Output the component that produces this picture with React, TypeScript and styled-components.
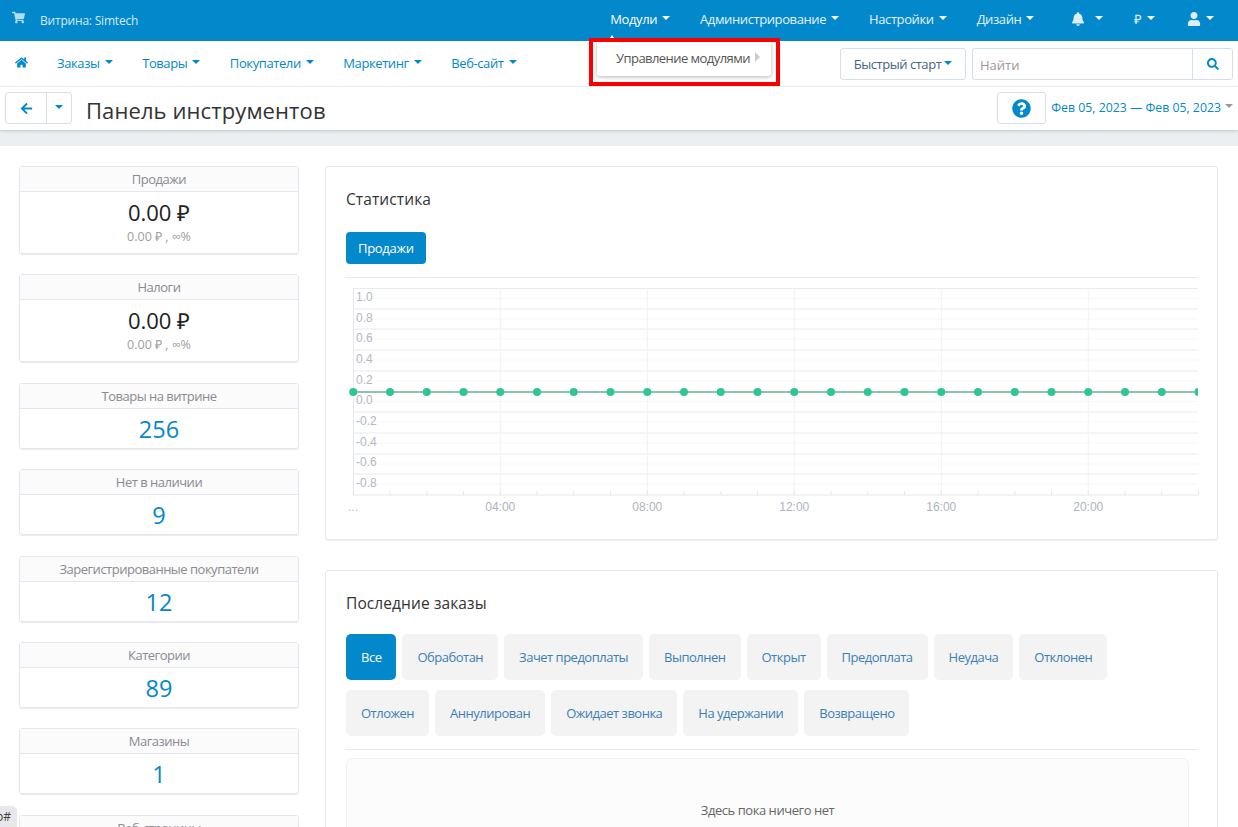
import React from "react";
import styled, { createGlobalStyle } from "styled-components";
import { FaShoppingCart, FaHome, FaArrowLeft, FaBell, FaUser, FaSearch, FaQuestionCircle } from "react-icons/fa";

const Global = createGlobalStyle`
  html, body { margin: 0; padding: 0; height: 827px; overflow: hidden; background: #fff; }
  body { font-family: "Open Sans", "Liberation Sans", sans-serif; font-size: 13px; color: #333; }
  * { box-sizing: border-box; }
`;

const BLUE = "#0388cc";

const Page = styled.div`
  position: relative;
  width: 1238px;
  height: 827px;
  overflow: hidden;
`;

const TopBar = styled.header`
  height: 41px;
  background: ${BLUE};
  display: flex;
  align-items: flex-start;
  padding: 0 24px 0 12px;
  color: #fff;
`;
const StoreLink = styled.div`
  display: flex;
  align-items: center;
  height: 41px;
  font-size: 12px;
  letter-spacing: -0.2px;
  font-weight: 400;
  color: #d4ebf7;
  svg { margin: -7px 15px 0 0; width: 13px; height: 13px; color: #b6dcf0; }
`;
const TopMenu = styled.nav`
  margin-left: auto;
  display: flex;
  align-items: center;
  height: 38px;
`;
const TopItem = styled.span<{ $gap?: number; $active?: boolean }>`
  display: flex;
  align-items: center;
  margin-left: ${(p) => p.$gap ?? 0}px;
  font-size: 13px;
  letter-spacing: -0.4px;
  font-weight: 400;
  color: ${(p) => (p.$active ? "#fff" : "#e4f2fa")};
  svg { width: 14px; height: 14px; color: #dceef8; }
`;
const Caret = styled.i<{ $color?: string; $left?: number }>`
  display: inline-block;
  width: 0;
  height: 0;
  margin-left: ${(p) => p.$left ?? 5}px;
  border-left: 4.5px solid transparent;
  border-right: 4.5px solid transparent;
  border-top: 4.5px solid ${(p) => p.$color ?? "#fff"};
  position: relative;
  top: -1px;
`;

const SecondBar = styled.nav`
  height: 46px;
  display: flex;
  align-items: center;
  padding: 0 5px 0 15px;
  border-bottom: 1px solid #f1f2f4;
`;
const HomeLink = styled.span`
  display: flex;
  margin: -2px 29px 0 0;
  color: ${BLUE};
  svg { width: 13px; height: 13px; }
`;
const SecondItem = styled.span`
  display: flex;
  align-items: center;
  margin-right: 29.5px;
  color: ${BLUE};
  font-size: 13px;
  letter-spacing: -0.4px;
  margin-top: -2px;
`;
const SecondRight = styled.div`
  margin-left: auto;
  display: flex;
  gap: 6px;
`;
const QuickStart = styled.button`
  width: 126px;
  height: 32px;
  border: 1px solid #d6dfe6;
  border-radius: 3px;
  background: #fff;
  font: 13px "Open Sans", sans-serif;
  letter-spacing: -0.45px;
  color: #43667f;
  display: flex;
  align-items: center;
  justify-content: center;
  padding: 0;
`;
const SearchBox = styled.div`
  width: 261px;
  height: 32px;
  border: 1px solid #d6dfe6;
  border-radius: 3px;
  display: flex;
`;
const SearchField = styled.span`
  flex: 1;
  padding: 0 7px;
  line-height: 32px;
  font-size: 13px;
  color: #999;
`;
const SearchBtn = styled.span`
  width: 40px;
  border-left: 1px solid #d6dfe6;
  display: flex;
  align-items: center;
  justify-content: center;
  color: ${BLUE};
  svg { width: 12px; height: 12px; }
`;

const Toolbar = styled.div`
  height: 43px;
  display: flex;
  align-items: flex-start;
  padding: 5px 5px 0 5px;
  background: #fff;
  box-shadow: 0 1px 3px rgba(0, 0, 0, 0.18);
  position: relative;
`;
const BackGroup = styled.div`
  width: 67px;
  height: 32px;
  display: flex;
  border: 1px solid #d6dfe6;
  border-radius: 3px;
`;
const BackBtn = styled.span`
  width: 41px;
  border-right: 1px solid #d6dfe6;
  display: flex;
  align-items: center;
  justify-content: center;
  color: ${BLUE};
  svg { width: 13px; height: 13px; }
`;
const BackCaret = styled.span`
  flex: 1;
  display: flex;
  align-items: center;
  justify-content: center;
  i { margin: 0; }
`;
const PageTitle = styled.h1`
  margin: 0 0 0 14px;
  font-size: 22px;
  line-height: 36px;
  font-weight: 400;
  color: #333;
  letter-spacing: 0.1px;
`;
const ToolbarRight = styled.div`
  margin-left: auto;
  display: flex;
  align-items: center;
  height: 32px;
`;
const HelpBtn = styled.span`
  width: 49px;
  height: 32px;
  border: 1px solid #d6dfe6;
  border-radius: 3px;
  display: flex;
  align-items: center;
  justify-content: center;
  color: ${BLUE};
  svg { width: 19px; height: 19px; }
`;
const DateRange = styled.span`
  display: flex;
  align-items: center;
  margin-left: 5px;
  margin-top: -2px;
  font-size: 12.3px;
  color: ${BLUE};
`;

const Strip = styled.div`
  height: 16px;
  background: #eceff2;
`;

const Content = styled.main`
  display: grid;
  grid-template-columns: 280px 893px;
  column-gap: 26px;
  padding: 20px 0 0 19px;
`;
const StatColumn = styled.aside`
  display: flex;
  flex-direction: column;
  gap: 20.4px;
`;
const StatCard = styled.section`
  border: 1px solid #e3e7f0;
  border-radius: 3px;
  box-shadow: 0 1px 1px rgba(0, 0, 0, 0.08);
  text-align: center;
`;
const StatHead = styled.div`
  height: 25px;
  line-height: 25px;
  background: #fbfbfc;
  border-bottom: 1px solid #e3e7f0;
  font-size: 13px;
  letter-spacing: -0.5px;
  color: #8a8a92;
`;
const StatBody = styled.div<{ $top: number; $bottom: number }>`
  padding: ${(p) => p.$top}px 0 ${(p) => p.$bottom}px;
`;
const Amount = styled.div`
  font-size: 22px;
  line-height: 31px;
  color: #222;
`;
const SubAmount = styled.div`
  font-size: 12.5px;
  line-height: 18px;
  color: #a0a0a0;
`;
const BigNumber = styled.div`
  font-size: 23.5px;
  line-height: 27px;
  color: ${BLUE};
`;

const Panels = styled.div`
  display: flex;
  flex-direction: column;
  gap: 30px;
`;
const Panel = styled.section`
  border: 1px solid #e3e7f0;
  border-radius: 3px;
  box-shadow: 0 1px 1px rgba(0, 0, 0, 0.06);
  padding: 20px 20px 21px;
`;
const PanelTitle = styled.h2<{ $after: number }>`
  margin: 0 0 ${(p) => p.$after}px;
  font-size: 15.5px;
  letter-spacing: 0.1px;
  line-height: 25px;
  font-weight: 500;
  color: #333;
`;
const PrimaryTab = styled.span`
  display: inline-block;
  height: 32px;
  line-height: 32px;
  padding: 0 12px;
  border-radius: 4px;
  background: ${BLUE};
  color: #fff;
  font-size: 13px;
  letter-spacing: -0.3px;
  font-weight: 400;
`;
const Rule = styled.hr<{ $top: number; $bottom: number }>`
  border: 0;
  border-top: 1px solid #e8e8ea;
  margin: ${(p) => p.$top}px 0 ${(p) => p.$bottom}px;
`;
const ChartSvg = styled.svg`
  display: block;
  font-family: "Liberation Sans", Arial, sans-serif;
  font-size: 12px;
`;
const TabRow = styled.div`
  display: flex;
  flex-wrap: wrap;
  gap: 10px 6px;
  width: 843px;
`;
const FilterTab = styled.span<{ $on?: boolean }>`
  height: 46px;
  line-height: 46px;
  padding: 0 15px;
  border-radius: 5px;
  font-size: 13px;
  letter-spacing: -0.5px;
  background: ${(p) => (p.$on ? BLUE : "#f3f3f4")};
  color: ${(p) => (p.$on ? "#fff" : "#3c7fb5")};
`;
const EmptyBox = styled.div`
  width: 843px;
  height: 120px;
  border: 1px solid #f1f1f3;
  border-radius: 6px;
  background: #fcfcfc;
  text-align: center;
  padding-top: 41px;
  line-height: 20px;
  font-size: 13px;
  letter-spacing: -0.45px;
  color: #666;
`;

const Dropdown = styled.div`
  position: absolute;
  left: 597px;
  top: 41px;
  width: 174px;
  height: 35px;
  background: #fff;
  border-radius: 3px;
  box-shadow: 0 1px 4px rgba(0, 0, 0, 0.3);
  padding: 8px 0 0 19px;
  font-size: 13px;
  letter-spacing: -0.55px;
  line-height: 18px;
  color: #555;
  display: flex;
`;
const SubArrow = styled.i`
  width: 0;
  height: 0;
  margin: 3px 0 0 5px;
  border-top: 5px solid transparent;
  border-bottom: 5px solid transparent;
  border-left: 5px solid #ccc;
`;
const MenuNotch = styled.i`
  position: absolute;
  left: 608px;
  top: 35px;
  width: 0;
  height: 0;
  border-left: 4px solid transparent;
  border-right: 4px solid transparent;
  border-bottom: 6px solid #fff;
`;
const Highlight = styled.div`
  position: absolute;
  left: 589px;
  top: 38px;
  width: 191px;
  height: 48px;
  border: 4px solid #fa0000;
`;
const DebugTab = styled.div`
  position: absolute;
  left: -8px;
  top: 806px;
  width: 25px;
  height: 24px;
  background: #e8e8ea;
  border-radius: 0 5px 0 0;
  font-size: 12px;
  line-height: 22px;
  text-align: right;
  padding-right: 6px;
  color: #444;
`;

const hours = Array.from({ length: 24 }, (_, i) => 353.25 + i * 36.75);
const major = [288.5, 309, 329, 350, 371, 391.5, 412, 433, 454, 474];
const yLabels: [string, number][] = [
  ["1.0", 297], ["0.8", 318], ["0.6", 338], ["0.4", 359], ["0.2", 380],
  ["0.0", 400], ["-0.2", 421], ["-0.4", 442], ["-0.6", 462], ["-0.8", 483],
];
const xLabels: [string, number][] = [["04:00", 500.25], ["08:00", 647.25], ["12:00", 794.25], ["16:00", 941.25], ["20:00", 1088.25]];

function Chart() {
  return (
    <ChartSvg width={853} height={240} viewBox="346 278 853 240">
      <defs>
        <clipPath id="plot"><rect x="340" y="280" width="858" height="220" /></clipPath>
      </defs>
      {major.map((y) => (
        <React.Fragment key={y}>
          <line x1="353" x2="1198" y1={y} y2={y} stroke="#e9eaee" />
          <line x1="353" x2="1198" y1={y + 10} y2={y + 10} stroke="#f7f7f9" />
        </React.Fragment>
      ))}
      <line x1="353" x2="1198" y1="495" y2="495" stroke="#e6e7ea" />
      <line x1="353.5" x2="353.5" y1="288" y2="495" stroke="#e6e7ea" />
      {xLabels.map(([, x]) => (
        <line key={x} x1={x} x2={x} y1="288" y2="495" stroke="#f0f1f4" />
      ))}
      {hours.map((x) => (
        <line key={x} x1={x} x2={x} y1="491" y2="495" stroke="#e6e7ea" />
      ))}
      {yLabels.map(([t, y]) => (
        <text key={t} x="356" y={y + 4} fill="#b2b8c4">{t}</text>
      ))}
      {xLabels.map(([t, x]) => (
        <text key={t} x={x} y="511" fill="#adb3bf" textAnchor="middle">{t}</text>
      ))}
      <text x="348" y="511" fill="#b2c4d8">...</text>
      <g clipPath="url(#plot)">
        <line x1="353" x2="1198" y1="392" y2="392" stroke="#8cc5a9" strokeWidth="2" />
        {hours.map((x) => (
          <circle key={x} cx={x} cy="392" r="4" fill="#30c595" />
        ))}
      </g>
    </ChartSvg>
  );
}

const money = [{ title: "Продажи" }, { title: "Налоги" }];
const counts: [string, string][] = [
  ["Товары на витрине", "256"],
  ["Нет в наличии", "9"],
  ["Зарегистрированные покупатели", "12"],
  ["Категории", "89"],
  ["Магазины", "1"],
  ["Веб-страницы", "14"],
];
const tabs = ["Обработан", "Зачет предоплаты", "Выполнен", "Открыт", "Предоплата", "Неудача", "Отклонен", "Отложен", "Аннулирован", "Ожидает звонка", "На удержании", "Возвращено"];

export default function App() {
  return (
    <Page>
      <Global />
      <TopBar>
        <StoreLink><FaShoppingCart />Витрина: Simtech</StoreLink>
        <TopMenu>
          <TopItem $active>Модули<Caret /></TopItem>
          <TopItem $gap={30}>Администрирование<Caret /></TopItem>
          <TopItem $gap={30}>Настройки<Caret /></TopItem>
          <TopItem $gap={30}>Дизайн<Caret /></TopItem>
          <TopItem $gap={37}><FaBell /><Caret $left={10} /></TopItem>
          <TopItem $gap={31}>₽<Caret /></TopItem>
          <TopItem $gap={32}><FaUser /><Caret /></TopItem>
        </TopMenu>
      </TopBar>
      <SecondBar>
        <HomeLink><FaHome /></HomeLink>
        {["Заказы", "Товары", "Покупатели", "Маркетинг", "Веб-сайт"].map((t) => (
          <SecondItem key={t}>{t}<Caret $color={BLUE} /></SecondItem>
        ))}
        <SecondRight>
          <QuickStart>Быстрый старт<Caret $color={BLUE} $left={3} /></QuickStart>
          <SearchBox>
            <SearchField>Найти</SearchField>
            <SearchBtn><FaSearch /></SearchBtn>
          </SearchBox>
        </SecondRight>
      </SecondBar>
      <Toolbar>
        <BackGroup>
          <BackBtn><FaArrowLeft /></BackBtn>
          <BackCaret><Caret $color={BLUE} /></BackCaret>
        </BackGroup>
        <PageTitle>Панель инструментов</PageTitle>
        <ToolbarRight>
          <HelpBtn><FaQuestionCircle /></HelpBtn>
          <DateRange>Фев 05, 2023 — Фев 05, 2023<Caret $color="#999" $left={4} /></DateRange>
        </ToolbarRight>
      </Toolbar>
      <Strip />
      <Content>
        <StatColumn>
          {money.map((m) => (
            <StatCard key={m.title}>
              <StatHead>{m.title}</StatHead>
              <StatBody $top={5} $bottom={7}>
                <Amount>0.00 ₽</Amount>
                <SubAmount>0.00 ₽ , ∞%</SubAmount>
              </StatBody>
            </StatCard>
          ))}
          {counts.map(([t, n]) => (
            <StatCard key={t}>
              <StatHead>{t}</StatHead>
              <StatBody $top={7} $bottom={5}><BigNumber>{n}</BigNumber></StatBody>
            </StatCard>
          ))}
        </StatColumn>
        <Panels>
          <Panel>
            <PanelTitle $after={20}>Статистика</PanelTitle>
            <PrimaryTab>Продажи</PrimaryTab>
            <Rule $top={13} $bottom={0} />
            <Chart />
          </Panel>
          <Panel>
            <PanelTitle $after={18}>Последние заказы</PanelTitle>
            <TabRow>
              <FilterTab $on>Все</FilterTab>
              {tabs.map((t) => <FilterTab key={t}>{t}</FilterTab>)}
            </TabRow>
            <Rule $top={13} $bottom={8} />
            <EmptyBox>Здесь пока ничего нет</EmptyBox>
          </Panel>
        </Panels>
      </Content>
      <MenuNotch />
      <Dropdown>Управление модулями<SubArrow /></Dropdown>
      <Highlight />
      <DebugTab>ф#</DebugTab>
    </Page>
  );
}
